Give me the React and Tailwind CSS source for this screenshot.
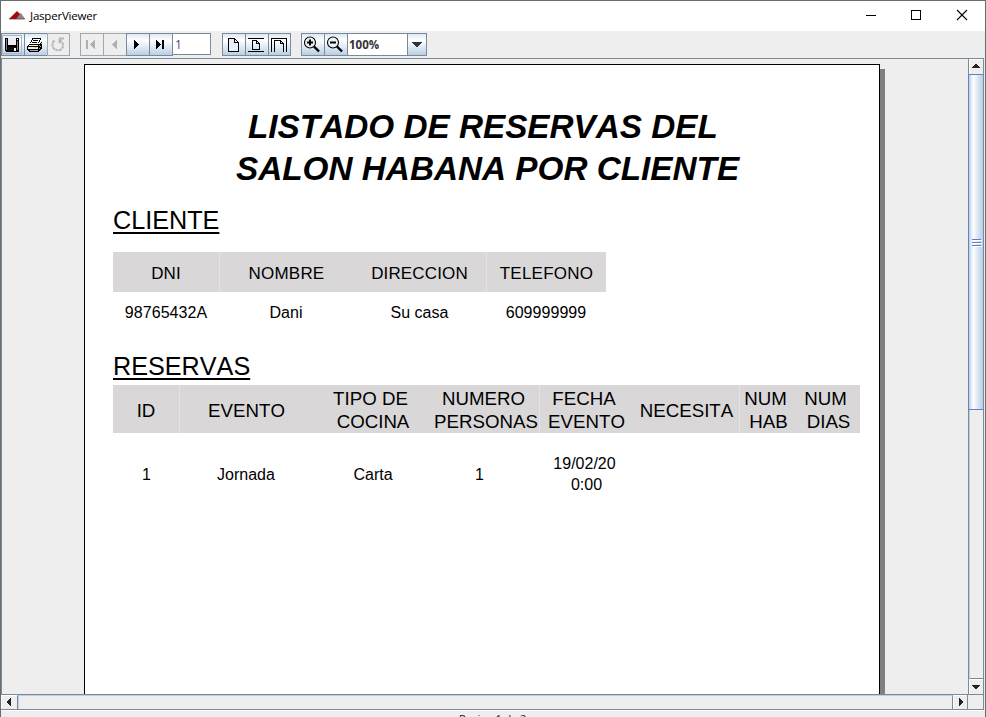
import React from 'react';

const ENABLED = 'border-[#7a8a99] bg-[linear-gradient(#dde8f3_0%,#ffffff_30%,#dde8f3_65%,#b8cfe5_100%)]';
const DISABLED = 'border-[#a3a8ad] bg-[#eeeeee]';

function ToolButton({ children, disabled, focused }) {
  return (
    <div className={`-mr-px flex h-[23px] w-6 shrink-0 items-center justify-center border ${disabled ? DISABLED : ENABLED}`}>
      <div className={`-ml-0.5 flex h-[19px] w-5 items-center justify-center ${focused ? 'border border-[#a3b8cc]' : ''}`}>{children}</div>
    </div>
  );
}

function Icon({ children, w = 16, h = 16 }) {
  return (
    <svg width={w} height={h} viewBox={`0 0 ${w} ${h}`} fill="none" shapeRendering="crispEdges" className="shrink-0">
      {children}
    </svg>
  );
}

const SaveIcon = () => (
  <Icon>
    <path d="M1 1h14v14H2v-1H1z" fill="#000" />
    <path d="M4 1h8v7H4z" fill="#eee" />
    <path d="M2 2h1v11H2zM13 4h1v9h-1z" fill="#808080" />
    <path d="M4 10h7v4H4z" fill="#111" />
    <path d="M10 11h2v3h-2zM13 2h1v1h-1z" fill="#fff" />
  </Icon>
);

const PrintIcon = () => (
  <Icon>
    <path d="M5 1h9v1h-1v2h-1v3H3V5h1V3h1z" fill="#fff" />
    <path d="M5.5 1.5h8l-2 5M5.5 1.5l-2 5" stroke="#000" />
    <path d="M6 3h5v1H6zM5 5h5v1H5z" fill="#000" />
    <path d="M3 7h9l3-3v7l-3 4H2l-2-2V9z" fill="#000" />
    <path d="M3 8h8v1H2v-1zM1 10h10v2H1z" fill="#eee" />
    <path d="M7 10h3v1H7z" fill="#e8dc2a" />
    <path d="M12 8h1v1h-1zM14 6h1v1h-1zM13 9h1v1h-1zM12 11h1v1h-1zM3 13h8v1H3z" fill="#aaa" />
  </Icon>
);

const ReloadIcon = () => (
  <svg width="16" height="16" viewBox="0 0 16 16" fill="none">
    <path d="M4.500 3.500C1.500 6 2 10.500 5 12.500C8 14.500 12.800 13 13 8.500C13 6.500 12 4.500 10 3.500" stroke="#b5b5b5" strokeWidth="2" strokeDasharray="3 .6" />
    <path d="M9 1.500h5M9.500 1.500v5" stroke="#b5b5b5" strokeWidth="1.800" />
  </svg>
);

const FirstIcon = () => <Icon><path d="M3 3h2v9H3zM11 3h1v9h-1v-1h-1v-1H9V9H8V8H7V7h1V6h1V5h1V4h1z" fill="#b0b0b0" /></Icon>;
const PrevIcon = () => <Icon><path d="M10 3h1v9h-1v-1H9v-1H8V9H7V8H6V7h1V6h1V5h1V4h1z" fill="#b0b0b0" /></Icon>;
const NextIcon = () => <Icon><path d="M5 3h1v1h1v1h1v1h1v1h1v1H9v1H8v1H7v1H6v1H5z" fill="#000" /></Icon>;
const LastIcon = () => <Icon><path d="M4 3h1v1h1v1h1v1h1v1h1v1H8v1H7v1H6v1H5v1H4zM10 3h2v9h-2z" fill="#000" /></Icon>;

const PageIcon = () => (
  <Icon>
    <path d="M3.500 1.500h6l4 4v9h-10z" fill="#e9f0f7" stroke="#000" />
    <path d="M9.500 1.500v4h4" stroke="#000" />
  </Icon>
);
const FitPageIcon = () => (
  <Icon>
    <path d="M0 1.500h16M0 14.500h16M4.500 3.500h4l3 3v6h-7z" stroke="#000" />
    <path d="M8.500 3.500v3h3" stroke="#000" />
  </Icon>
);
const FitWidthIcon = () => (
  <Icon>
    <path d="M.5 15V1.500h15V15M3.500 15V3.500h6l3 3V15M9.500 3.500v3h3" stroke="#000" />
  </Icon>
);
const ZoomIcon = ({ plus }) => (
  <svg width="18" height="17" viewBox="0 0 18 17" fill="none" className="shrink-0">
    <circle cx="7" cy="6.500" r="5.500" fill="#edf3f9" stroke="#000" strokeWidth="1.100" />
    <path d="M4 6.500h6" stroke="#000" strokeWidth="2" />
    {plus && <path d="M7 3.500v6" stroke="#000" strokeWidth="2" />}
    <path d="M11 10.500l5 5" stroke="#000" strokeWidth="2.400" />
  </svg>
);

function TitleBar() {
  return (
    <div className="flex h-[30px] shrink-0 items-center bg-white pl-2">
      <svg width="17" height="9" viewBox="0 0 17 9" className="-mt-0.5 shrink-0">
        <path d="M6 8L10 3L12 2L16 8z" fill="#8b8585" />
        <path d="M0 8L5 3L8 0L11 3L7 8z" fill="#a5090f" />
        <path d="M0 8h16" stroke="#5c3030" strokeWidth=".7" />
      </svg>
      <span className="ml-1 w-[80px] text-[11.5px] leading-4 tracking-[-0.2px] text-black font-['Open_Sans','Noto_Sans',sans-serif]">JasperViewer</span>
      <svg width="110" height="12" viewBox="0 0 110 12" fill="none" stroke="#000" className="-mt-[3px] ml-auto mr-[10px] shrink-0">
        <path d="M1 6.500h10M46.500 1.500h9v9h-9z" shapeRendering="crispEdges" />
        <path d="M92 1l10 10M102 1L92 11" strokeWidth="1.100" />
      </svg>
    </div>
  );
}

function Toolbar() {
  return (
    <div className="flex h-[27px] shrink-0 items-start pt-0.5">
      <div className="flex w-[79px]">
        <ToolButton focused><SaveIcon /></ToolButton>
        <ToolButton><PrintIcon /></ToolButton>
        <div className="flex w-[23px] [&>div]:w-[23px]"><ToolButton disabled><ReloadIcon /></ToolButton></div>
      </div>
      <div className="flex w-[142px]">
        <ToolButton disabled><FirstIcon /></ToolButton>
        <ToolButton disabled><PrevIcon /></ToolButton>
        <ToolButton><NextIcon /></ToolButton>
        <ToolButton><LastIcon /></ToolButton>
        <div className="h-[22px] w-[39px] border border-[#7a8a99] bg-white pl-0.5 text-[12px] leading-[21px] text-[#5b3a86] font-['Open_Sans',sans-serif]">1</div>
      </div>
      <div className="flex w-[79px]">
        <ToolButton><PageIcon /></ToolButton>
        <ToolButton><FitPageIcon /></ToolButton>
        <div className="flex w-[23px] [&>div]:w-[23px]"><ToolButton><FitWidthIcon /></ToolButton></div>
      </div>
      <div className="flex">
        <ToolButton><ZoomIcon plus /></ToolButton>
        <ToolButton><ZoomIcon /></ToolButton>
        <div className="h-[23px] w-[61px] border border-[#7a8a99] bg-white pl-px text-[11.5px] font-bold leading-[21px] text-[#333] font-['Open_Sans',sans-serif]">100%</div>
        <div className={`-ml-px flex h-[23px] w-5 items-center justify-center border ${ENABLED}`}>
          <Icon w={10} h={5}><path d="M0 0h10v1H9v1H8v1H7v1H6v1H4V4H3V3H2V2H1V1H0z" fill="#333" /></Icon>
        </div>
      </div>
    </div>
  );
}

const SECTION = 'h-[30px] text-[25.2px] leading-[30px] underline decoration-2 underline-offset-[3px] [text-decoration-skip-ink:none]';

function ClientTable() {
  return (
    <div className="mt-[17px] w-[493px]">
      <div className="grid h-10 grid-cols-[107px_133px_134px_119px] overflow-hidden bg-[#d9d7d8] text-center text-[17px] leading-[43px]">
        <div className="border-r border-[#e4e2e3] tracking-[0.1px]">DNI</div>
        <div className="tracking-[0.2px]">NOMBRE</div>
        <div className="border-r border-[#e4e2e3] tracking-[0.15px]">DIRECCION</div>
        <div className="tracking-[0.25px]">TELEFONO</div>
      </div>
      <div className="grid h-10 grid-cols-[106px_134px_133px_120px] text-center text-[16px] leading-[41px] tracking-[0.05px]">
        <div>98765432A</div>
        <div>Dani</div>
        <div>Su casa</div>
        <div>609999999</div>
      </div>
    </div>
  );
}

function TwoLine({ top, bottom, className = '', shift = 'pr-1' }) {
  return (
    <div className={`whitespace-nowrap pt-[2px] leading-[23px] ${className}`}>
      <div className={shift}>{top}</div>
      <div>{bottom}</div>
    </div>
  );
}

function ReservationTable() {
  return (
    <div className="mt-1 w-[747px]">
      <div className="grid h-12 grid-cols-[67px_133px_120px_107px_93px_107px_57px_63px] overflow-hidden bg-[#d9d7d8] text-center text-[18.7px] leading-[51px]">
        <div className="border-r border-[#e4e2e3]">ID</div>
        <div>EVENTO</div>
        <TwoLine top="TIPO DE" bottom="COCINA" shift="pr-[5px]" />
        <TwoLine top="NUMERO" bottom="PERSONAS" className="border-r border-[#e4e2e3]" shift="pr-[5px]" />
        <TwoLine top="FECHA" bottom="EVENTO" shift="pr-[5px]" />
        <div className="border-r border-[#e4e2e3] pl-px">NECESITA</div>
        <TwoLine top="NUM" bottom="HAB" shift="pr-[6px]" />
        <TwoLine top="NUM" bottom="DIAS" shift="pr-[6px]" />
      </div>
      <div className="grid h-[84px] grid-cols-[67px_133px_120px_93px_121px_213px] text-center text-[16px] leading-[84px]">
        <div>1</div>
        <div className="pr-px">Jornada</div>
        <div>Carta</div>
        <div>1</div>
        <div className="pt-5 leading-[21px]">
          <div className="pr-1">19/02/20</div>
          <div>0:00</div>
        </div>
        <div />
      </div>
    </div>
  );
}

function Report() {
  return (
    <div className="flex min-w-0 flex-1 overflow-hidden pl-[82px] pt-[5px]">
      <div className="w-[796px] shrink-0 border border-b-0 border-black bg-white pl-7 text-black font-['Liberation_Sans',Arial,sans-serif] [font-kerning:none]">
        <div className="mt-[41px] w-[747px] whitespace-nowrap text-[33.3px] font-bold italic leading-[42px]">
          <div className="pl-[135px]">LISTADO DE RESERVAS DEL</div>
          <div className="pl-[123px]">SALON HABANA POR CLIENTE</div>
        </div>
        <div className={`mt-[15px] ${SECTION}`}>CLIENTE</div>
        <ClientTable />
        <div className={`mt-[19px] ${SECTION}`}>RESERVAS</div>
        <ReservationTable />
      </div>
      <div className="mt-[5px] w-[5px] bg-[#808080]" />
    </div>
  );
}

function VerticalScrollbar() {
  return (
    <div className="flex w-4 shrink-0 flex-col border-x border-[#7a8a99] bg-[#eeeeee]">
      <div className="flex h-[15px] items-center justify-center border-l border-t border-white pb-0.5 pr-0.5">
        <Icon w={8} h={4}><path d="M3 0h2v1h1v1h1v1h1v1H0V3h1V2h1V1h1z" fill="#222" /></Icon>
      </div>
      <div className="-ml-px flex h-[336px] items-center justify-center border-y border-l border-[#6382bf] bg-[linear-gradient(90deg,#b8cfe5_0,#dde8f3_15%,#ffffff_30%,#dde8f3_60%,#b8cfe5_100%)]">
        <div className="flex h-[7px] w-[9px] flex-col justify-between">
          <div className="h-px bg-[#5c80c8] shadow-[1px_1px_0_white]" />
          <div className="h-px bg-[#5c80c8] shadow-[1px_1px_0_white]" />
          <div className="h-px bg-[#5c80c8] shadow-[1px_1px_0_white]" />
        </div>
      </div>
      <div className="flex-1 border-b border-l border-b-[#7a8a99] border-l-[#b8cfe5]" />
      <div className="flex h-[15px] items-center justify-center border-l border-t border-white pr-0.5">
        <Icon w={8} h={4}><path d="M0 0h8v1H7v1H6v1H5v1H3V3H2V2H1V1H0z" fill="#222" /></Icon>
      </div>
    </div>
  );
}

function HorizontalScrollbar() {
  return (
    <div className="flex h-4 shrink-0 border-y border-[#7a8a99] bg-[#eeeeee]">
      <div className="flex w-4 items-center justify-center border-l border-t border-white pb-px pr-px">
        <Icon w={4} h={8}><path d="M3 0h1v8H3V7H2V6H1V5H0V3h1V2h1V1h1z" fill="#222" /></Icon>
      </div>
      <div className="flex-1 border-x border-t border-x-[#7a8a99] border-t-[#b8cfe5]">
        <div className="h-full w-px bg-[#b8cfe5]" />
      </div>
      <div className="flex w-[14px] items-center justify-center border-l border-t border-white pb-px">
        <Icon w={4} h={8}><path d="M0 0h1v1h1v1h1v1h1v2H3v1H2v1H1v1H0z" fill="#222" /></Icon>
      </div>
      <div className="w-[17px] border-x border-[#7a8a99]" />
    </div>
  );
}

export default function App() {
  return (
    <div className="flex h-[717px] w-[986px] flex-col overflow-hidden border border-b-0 border-[#6b6b6b] bg-[#eeeeee]">
      <TitleBar />
      <Toolbar />
      <div className="mr-px flex h-[636px] shrink-0 border-l border-t border-[#7a8a99]">
        <Report />
        <VerticalScrollbar />
      </div>
      <div className="mr-px shrink-0"><HorizontalScrollbar /></div>
      <div className="h-px shrink-0 bg-white" />
      <div className="mt-px h-[14px] shrink-0 pl-[458px] text-[11px] leading-[14px] tracking-[-0.1px] text-[#222] font-['Open_Sans',sans-serif]">Pagina 1 de 2</div>
    </div>
  );
}
